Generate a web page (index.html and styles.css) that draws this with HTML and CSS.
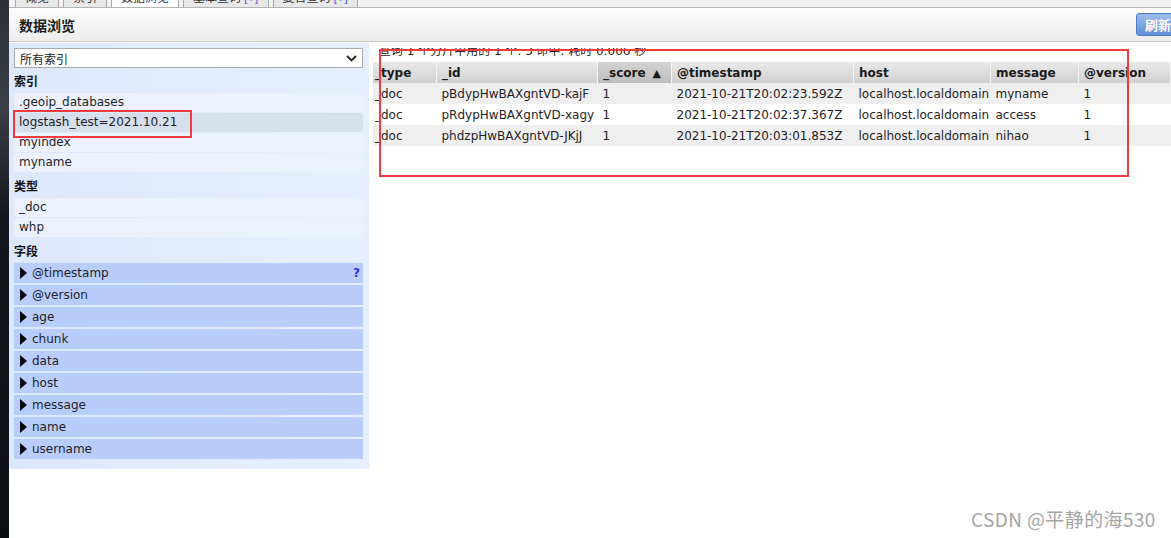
FILE: index.html
```html
<!DOCTYPE html>
<html>
<head>
<meta charset="utf-8">
<link rel="stylesheet" href="styles.css">
</head>
<body>
<div class="app">
  <div class="strip"></div>
  <div class="main">
    <div class="tabs">
      <div class="tab">概览</div>
      <div class="tab">索引</div>
      <div class="tab active">数据浏览</div>
      <div class="tab">基本查询 <span class="plus">[+]</span></div>
      <div class="tab">复合查询 <span class="plus">[+]</span></div>
    </div>
    <div class="header">
      <div class="title">数据浏览</div>
      <div class="refresh">刷新</div>
    </div>
    <div class="content">
      <div class="side">
        <div class="select"><span>所有索引</span>
          <svg class="chev" width="11" height="7" viewBox="0 0 11 7"><path d="M1 1 L5.5 5.5 L10 1" fill="none" stroke="#222" stroke-width="1.8"/></svg>
        </div>
        <div class="heading">索引</div>
        <div class="item">.geoip_databases</div>
        <div class="item selected">logstash_test=2021.10.21</div>
        <div class="item">myindex</div>
        <div class="item">myname</div>
        <div class="heading">类型</div>
        <div class="item">_doc</div>
        <div class="item">whp</div>
        <div class="heading">字段</div>
        <div class="field"><span class="tri"></span><span class="fname">@timestamp</span><span class="q">?</span></div>
        <div class="field"><span class="tri"></span><span class="fname">@version</span></div>
        <div class="field"><span class="tri"></span><span class="fname">age</span></div>
        <div class="field"><span class="tri"></span><span class="fname">chunk</span></div>
        <div class="field"><span class="tri"></span><span class="fname">data</span></div>
        <div class="field"><span class="tri"></span><span class="fname">host</span></div>
        <div class="field"><span class="tri"></span><span class="fname">message</span></div>
        <div class="field"><span class="tri"></span><span class="fname">name</span></div>
        <div class="field"><span class="tri"></span><span class="fname">username</span></div>
      </div>
      <div class="results">
        <div class="info"><div class="info-inner">查询 1 个分片中用的 1 个. 3 命中. 耗时 0.006 秒</div></div>
        <table class="grid">
          <thead>
            <tr>
              <th class="c-type">_type</th>
              <th class="c-id">_id</th>
              <th class="c-score sorted">_score<span class="arrow">▲</span></th>
              <th class="c-ts">@timestamp</th>
              <th class="c-host">host</th>
              <th class="c-msg">message</th>
              <th class="c-ver">@version</th>
              <th class="c-fill"></th>
            </tr>
          </thead>
          <tbody>
            <tr class="odd"><td class="c-type">_doc</td><td>pBdypHwBAXgntVD-kajF</td><td>1</td><td>2021-10-21T20:02:23.592Z</td><td>localhost.localdomain</td><td>myname</td><td>1</td><td></td></tr>
            <tr><td class="c-type">_doc</td><td>pRdypHwBAXgntVD-xagy</td><td>1</td><td>2021-10-21T20:02:37.367Z</td><td>localhost.localdomain</td><td>access</td><td>1</td><td></td></tr>
            <tr class="odd"><td class="c-type">_doc</td><td>phdzpHwBAXgntVD-JKjJ</td><td>1</td><td>2021-10-21T20:03:01.853Z</td><td>localhost.localdomain</td><td>nihao</td><td>1</td><td></td></tr>
          </tbody>
        </table>
      </div>
    </div>
  </div>
</div>
<div class="mark mark-table"></div>
<div class="mark mark-index"></div>
<div class="watermark">CSDN @平静的海530</div>
</body>
</html>
```
FILE: styles.css
```css
html, body {
  margin: 0;
  padding: 0;
  width: 1171px;
  height: 538px;
  overflow: hidden;
  background: #fff;
  font-family: "DejaVu Sans", "Noto Sans CJK SC", sans-serif;
  font-size: 12px;
  color: #1e1e28;
}
.app {
  display: flex;
  height: 538px;
}
.strip {
  width: 9px;
  flex: none;
  background: linear-gradient(#2b3038 0, #3a3f46 20%, #14181e 40%, #0c1016 100%);
}
.main {
  flex: 1;
  display: flex;
  flex-direction: column;
  min-width: 0;
}
.tabs {
  height: 7px;
  overflow: hidden;
  border-bottom: 1px solid #b5b5b5;
  display: flex;
  align-items: flex-end;
  gap: 4px;
  padding-left: 6px;
  background: #f2f2f2;
}
.tab {
  flex: none;
  height: 17px;
  line-height: 14px;
  padding: 0 9px;
  border: 1px solid #a8a8a8;
  border-bottom: none;
  background: #e8e8e8;
  font-family: "Noto Sans CJK SC", sans-serif;
  font-size: 12px;
  color: #333;
}
.tab.active {
  background: #fff;
}
.plus {
  color: #2a3fd6;
}
.header {
  height: 33px;
  display: flex;
  align-items: center;
  justify-content: space-between;
  padding-left: 10px;
  background: linear-gradient(#fefefe, #ececec);
  border-bottom: 1px solid #c9c9c9;
}
.title {
  font-family: "Noto Sans CJK SC", sans-serif;
  font-weight: bold;
  font-size: 14px;
  color: #1b1b1b;
}
.refresh {
  height: 21px;
  line-height: 21px;
  padding: 0 9px 0 8px;
  margin-right: -10px;
  border: 1px solid #4d7fc8;
  border-radius: 3px;
  background: linear-gradient(#9dbdeb, #6190d8);
  color: #fff;
  font-family: "Noto Sans CJK SC", sans-serif;
  font-weight: bold;
  font-size: 13px;
}
.content {
  display: flex;
  align-items: flex-start;
  padding-top: 1px;
}
.side {
  width: 349px;
  flex: none;
  padding: 5px 6px 8px 5px;
  background: linear-gradient(to right, #dce8fb, #e6effd);
}
.select {
  height: 18px;
  border: 1px solid #a9a9a9;
  background: #fff;
  display: flex;
  align-items: center;
  justify-content: space-between;
  padding: 0 5px 0 5px;
  font-family: "Noto Sans CJK SC", sans-serif;
  font-size: 12px;
  color: #222;
}
.heading {
  height: 25px;
  line-height: 25px;
  font-family: "Noto Sans CJK SC", sans-serif;
  font-weight: bold;
  font-size: 12px;
  color: #111;
}
.item {
  height: 19px;
  line-height: 19px;
  margin-bottom: 1px;
  padding-left: 5px;
  border-radius: 4px;
  background: #ecf2fd;
}
.item.selected {
  background: #d6dfec;
}
.field {
  height: 20px;
  margin-bottom: 2px;
  background: #b8cdfc;
  display: flex;
  align-items: center;
}
.tri {
  width: 0;
  height: 0;
  border-left: 7px solid #0a0a14;
  border-top: 6px solid transparent;
  border-bottom: 6px solid transparent;
  margin: 0 5px 0 6px;
}
.fname {
  flex: 1;
}
.q {
  color: #2f2fe0;
  font-weight: bold;
  margin-right: 3px;
}
.results {
  flex: 1;
  padding-left: 4px;
  min-width: 0;
}
.info {
  height: 11px;
  margin-top: 5px;
  overflow: hidden;
  padding-left: 6px;
}
.info-inner {
  margin-top: -5px;
  line-height: 16px;
  font-family: "DejaVu Sans", "Noto Sans CJK SC", sans-serif;
  font-size: 12px;
  color: #222;
}
.grid {
  margin-top: 3px;
  border-collapse: collapse;
  width: 100%;
  table-layout: fixed;
}
.grid th {
  height: 21px;
  padding: 0 0 0 5px;
  text-align: left;
  font-weight: bold;
  color: #1a1a1a;
  background: linear-gradient(#e9e9e9, #d0d0d0);
  border-right: 1px solid #f4f4f4;
  white-space: nowrap;
  overflow: hidden;
}
.grid th.sorted {
  background: linear-gradient(#d2d2d2, #bdbdbd);
}
.arrow {
  margin-left: 7px;
  font-size: 11px;
}
.grid td {
  height: 21px;
  padding: 0 0 0 5px;
  white-space: nowrap;
  overflow: hidden;
}
.grid tr.odd td {
  background: #efefef;
}
.grid .c-type { width: 61px; padding-left: 2px; }
.grid .c-id { width: 155px; }
.grid .c-score { width: 68px; }
.grid .c-ts { width: 176px; }
.grid .c-host { width: 131px; }
.grid .c-msg { width: 82px; }
.grid .c-ver { width: 86px; }
.grid .c-fill { width: auto; }
.mark {
  position: absolute;
  border: 2px solid #f23b3b;
}
.mark-table {
  left: 379px;
  top: 49px;
  width: 746px;
  height: 124px;
}
.mark-index {
  left: 13px;
  top: 110px;
  width: 175px;
  height: 24px;
}
.watermark {
  position: absolute;
  left: 971px;
  top: 505px;
  font-family: "Noto Sans CJK SC", sans-serif;
  font-size: 19px;
  letter-spacing: 0.4px;
  color: #a5a5a5;
}
```
